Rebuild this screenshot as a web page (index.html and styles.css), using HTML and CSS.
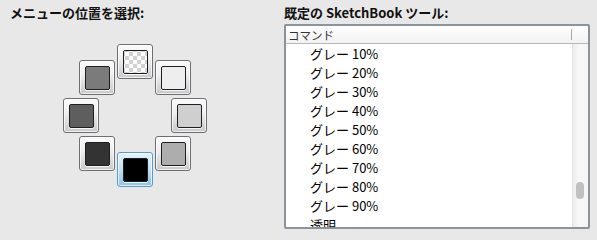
FILE: index.html
```html
<!DOCTYPE html>
<html lang="ja">
<head>
<meta charset="utf-8">
<link rel="stylesheet" href="styles.css">
</head>
<body>
<div class="page">
  <section class="left">
    <h2 class="title">メニューの位置を選択:</h2>
    <div class="ring">
      <div class="btn p-top"><span class="sw checker"></span></div>
      <div class="btn p-tl"><span class="sw g50"></span></div>
      <div class="btn p-tr"><span class="sw g5"></span></div>
      <div class="btn p-l"><span class="sw g60"></span></div>
      <div class="btn p-r"><span class="sw g20"></span></div>
      <div class="btn p-bl"><span class="sw g80"></span></div>
      <div class="btn p-br"><span class="sw g30"></span></div>
      <div class="btn p-b selected"><span class="sw g100"></span></div>
    </div>
  </section>
  <section class="right">
    <h2 class="title">既定の SketchBook ツール:</h2>
    <div class="listbox">
      <div class="header">
        <span class="col">コマンド</span>
        <span class="divider"></span>
      </div>
      <div class="body">
        <ul class="items">
          <li>グレー 10%</li>
          <li>グレー 20%</li>
          <li>グレー 30%</li>
          <li>グレー 40%</li>
          <li>グレー 50%</li>
          <li>グレー 60%</li>
          <li>グレー 70%</li>
          <li>グレー 80%</li>
          <li>グレー 90%</li>
          <li>透明</li>
        </ul>
        <div class="scroll"><span class="thumb"></span></div>
      </div>
    </div>
  </section>
</div>
</body>
</html>
```

FILE: styles.css
```css
html, body {
  margin: 0;
  padding: 0;
  background: #e8e8e8;
  width: 597px;
  height: 240px;
  overflow: hidden;
  font-family: "Noto Sans CJK JP", "DejaVu Sans", sans-serif;
  color: #000;
}

.page {
  display: flex;
  height: 240px;
}

.title {
  margin: 0;
  font-size: 13px;
  font-weight: bold;
  line-height: 16px;
  padding-top: 5px;
  color: #111;
}

.left {
  width: 275px;
  padding-left: 10px;
  box-sizing: border-box;
}

.right {
  width: 307px;
  padding-left: 9px;
  box-sizing: content-box;
}

.ring {
  position: relative;
  height: 200px;
}

.btn {
  position: absolute;
  width: 36px;
  height: 35px;
  box-sizing: border-box;
  border: 1px solid #6c7076;
  border-radius: 3px;
  background: linear-gradient(#fafafa, #f0f0f0 40%, #c9c9c9);
  box-shadow: inset 0 0 0 1px rgba(255,255,255,0.7);
  display: flex;
  align-items: center;
  justify-content: center;
}

.btn.selected {
  border-color: #5b9bc9;
  background: linear-gradient(#e6f3fc, #c3e0f3 50%, #8cc2e4);
}

.p-top { left: 107px; top: 23px; }
.p-tl  { left: 69px;  top: 39px; }
.p-tr  { left: 145px; top: 39px; }
.p-l   { left: 53px;  top: 77px; }
.p-r   { left: 161px; top: 77px; }
.p-bl  { left: 69px;  top: 115px; }
.p-br  { left: 145px; top: 115px; }
.p-b   { left: 107px; top: 131px; }

.sw {
  display: block;
  width: 25px;
  height: 24px;
  box-sizing: border-box;
  border: 1px solid #1e1e1e;
  border-radius: 2px;
  box-shadow: 0 1px 0 rgba(255,255,255,0.8);
}

.checker {
  background-color: #ffffff;
  background-image: conic-gradient(#d2d2d2 25%, #fff 0 50%, #d2d2d2 0 75%, #fff 0);
  background-size: 8px 8px;
  background-position: 1px 1px;
}

.g5   { background: #eeeeee; }
.g20  { background: #cfcfcf; }
.g30  { background: #adadad; }
.g50  { background: #7b7b7b; }
.g60  { background: #5e5e5e; }
.g80  { background: #333333; }
.g100 { background: #000000; }

.listbox {
  margin-top: 3px;
  width: 306px;
  height: 205px;
  box-sizing: border-box;
  border: 2px solid #8b939c;
  border-radius: 2px;
  background: #fff;
  display: flex;
  flex-direction: column;
  overflow: hidden;
}

.header {
  height: 17px;
  flex: none;
  display: flex;
  align-items: center;
  border-bottom: 1px solid #b8b8b8;
  background: linear-gradient(#ffffff, #f2f2f2);
  position: relative;
}

.header .col {
  font-size: 11.5px;
  line-height: 14px;
  color: #333;
  padding-left: 2px;
  flex: 1;
}

.divider {
  width: 1px;
  height: 11px;
  background: #a8a8a8;
  margin-right: 16px;
}

.body {
  flex: 1;
  display: flex;
  min-height: 0;
}

.items {
  list-style: none;
  margin: 0;
  padding: 0 0 0 24px;
  flex: 1;
  overflow: hidden;
  font-size: 13px;
  line-height: 19px;
}

.items li {
  height: 19px;
  white-space: nowrap;
}

.scroll {
  width: 15px;
  flex: none;
  background: linear-gradient(90deg, #ececec, #f8f8f8 40%, #f4f4f4);
  border-left: 1px solid #e2e2e2;
  position: relative;
}

.thumb {
  position: absolute;
  left: 3px;
  top: 138px;
  width: 8px;
  height: 17px;
  border-radius: 4px;
  background: #c1c1c1;
}
```
